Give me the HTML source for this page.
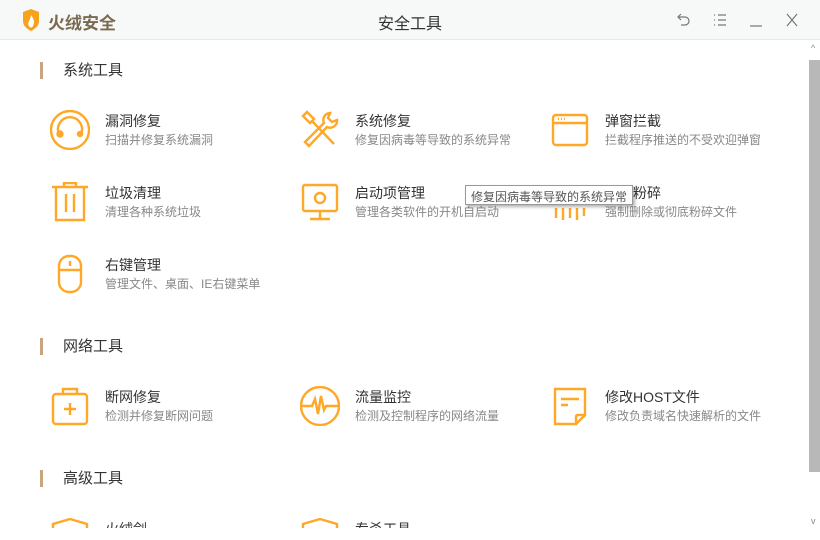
<!DOCTYPE html>
<html><head><meta charset="utf-8"><style>
*{margin:0;padding:0;box-sizing:border-box}
html,body{width:820px;height:540px;overflow:hidden}
body{background:#fff;font-family:"Liberation Sans","Noto Sans CJK SC",sans-serif;position:relative}
.hdr{position:absolute;left:0;top:0;width:820px;height:40px;background:#f7f8f8;border-bottom:1px solid #e8e8e8}
.logo{position:absolute;left:48px;top:9px;font-size:17px;font-weight:bold;color:#7a6a50}
.ttl{position:absolute;left:0;width:820px;text-align:center;top:10px;font-size:16px;color:#333}
.main{position:absolute;left:0;top:40px;width:808px;height:488px;overflow:hidden}
.sec{position:absolute;left:40px;height:17px;border-left:3px solid #c8a57e;padding-left:20px;font-size:15px;color:#333;line-height:17px}
.it{position:absolute;width:240px;height:40px}
.it svg{position:absolute;left:-20px;top:-20px;width:40px;height:40px}
.it b{position:absolute;left:35px;top:-19px;font-weight:normal;font-size:14px;color:#333;white-space:nowrap}
.it i{position:absolute;left:35px;top:1px;font-style:normal;font-size:12px;color:#888;white-space:nowrap}
.sb{position:absolute;left:809px;top:60px;width:11px;height:412px;background:#b8b8b8}
.tip{position:absolute;left:465px;top:185px;width:168px;height:20px;border:1px solid #999;background:#fff;box-shadow:2px 2px 3px rgba(0,0,0,.3);font-size:12px;color:#555;padding:2px 0 0 5px;white-space:nowrap}
</style></head><body>
<div class="hdr">
<svg style="position:absolute;left:22px;top:9px" width="18" height="22" viewBox="0 0 18 22"><path d="M1 3L9 0 17 3V12C17 17 13 20 9 22 5 20 1 17 1 12Z" fill="#f7a21d"/><path d="M9 6C12 10 13 13 11 17 10 19 8 19 7 17 5 14 8 12 9 6Z" fill="#fff"/></svg>
<div class="logo">火绒安全</div>
<div class="ttl">安全工具</div>
<svg style="position:absolute;left:676px;top:12px" width="16" height="16" viewBox="0 0 16 16" fill="none" stroke="#777" stroke-width="1.2"><path d="M5 2L2 5 5 8M2 5H9A4 4 0 0 1 9 13H5"/></svg>
<svg style="position:absolute;left:712px;top:12px" width="16" height="16" viewBox="0 0 16 16" fill="none" stroke="#777" stroke-width="1.2"><path d="M2 3H3M6 3H14M2 8H3M6 8H14M2 13H3M6 13H14"/></svg>
<svg style="position:absolute;left:748px;top:12px" width="16" height="16" viewBox="0 0 16 16" fill="none" stroke="#777" stroke-width="1.2"><path d="M2 14H14"/></svg>
<svg style="position:absolute;left:784px;top:12px" width="16" height="16" viewBox="0 0 16 16" fill="none" stroke="#777" stroke-width="1.2"><path d="M3 2L13 14M13 2L3 14"/></svg>
</div>
<div class="main">
<div class="sec" style="top:22px">系统工具</div>
<div class="it" style="left:70px;top:90px"><svg viewBox="0 0 40 40" fill="none" stroke="#ffa726" stroke-width="2.4"><circle cx="20" cy="20" r="19"/><path d="M9 24A12 12 0 1 1 31 24"/><circle cx="10" cy="24" r="2.5" fill="#ffa726"/><circle cx="30" cy="24" r="2" fill="#ffa726"/></svg><b>漏洞修复</b><i>扫描并修复系统漏洞</i></div>
<div class="it" style="left:320px;top:90px"><svg viewBox="0 0 40 40" fill="none" stroke="#ffa726" stroke-width="2.4"><path d="M3 6L7 2 14 9 10 13ZM12 11L34 34"/><path d="M30 3A7 7 0 0 0 24 13L5 32 9 36 27 17A7 7 0 0 0 37 10L32 12 28 8Z"/></svg><b>系统修复</b><i>修复因病毒等导致的系统异常</i></div>
<div class="it" style="left:570px;top:90px"><svg viewBox="0 0 40 40" fill="none" stroke="#ffa726" stroke-width="2.4"><rect x="3" y="5" width="34" height="30" rx="3"/><path d="M3 13H37"/><path d="M8 9H9M11 9H12M14 9H15"/></svg><b>弹窗拦截</b><i>拦截程序推送的不受欢迎弹窗</i></div>
<div class="it" style="left:70px;top:162px"><svg viewBox="0 0 40 40" fill="none" stroke="#ffa726" stroke-width="2.4"><path d="M2 5H38M14 5V1H26V5M6 5V38H34V5M16 12V30M24 12V30"/></svg><b>垃圾清理</b><i>清理各种系统垃圾</i></div>
<div class="it" style="left:320px;top:162px"><svg viewBox="0 0 40 40" fill="none" stroke="#ffa726" stroke-width="2.4"><rect x="3" y="3" width="34" height="26" rx="2"/><path d="M20 29V37M10 37H30"/><circle cx="20" cy="16" r="5"/></svg><b>启动项管理</b><i>管理各类软件的开机自启动</i></div>
<div class="it" style="left:570px;top:162px"><svg viewBox="0 0 40 40" fill="none" stroke="#ffa726" stroke-width="2.4"><path d="M3 22V8H37V22M6 26V36M13 26V38M20 26V36M27 26V38M34 26V34"/></svg><b>文件粉碎</b><i>强制删除或彻底粉碎文件</i></div>
<div class="it" style="left:70px;top:234px"><svg viewBox="0 0 40 40" fill="none" stroke="#ffa726" stroke-width="2.4"><rect x="9" y="2" width="22" height="36" rx="10"/><path d="M9 16H31M20 7V12"/></svg><b>右键管理</b><i>管理文件、桌面、IE右键菜单</i></div>
<div class="sec" style="top:298px">网络工具</div>
<div class="it" style="left:70px;top:366px"><svg viewBox="0 0 40 40" fill="none" stroke="#ffa726" stroke-width="2.4"><rect x="3" y="8" width="34" height="30" rx="3"/><path d="M13 8V3H27V8M20 17V29M14 23H26"/></svg><b>断网修复</b><i>检测并修复断网问题</i></div>
<div class="it" style="left:320px;top:366px"><svg viewBox="0 0 40 40" fill="none" stroke="#ffa726" stroke-width="2.4"><circle cx="20" cy="20" r="19"/><path d="M1 20H12L15 13 18 28 21 10 24 24 26 20H39"/></svg><b>流量监控</b><i>检测及控制程序的网络流量</i></div>
<div class="it" style="left:570px;top:366px"><svg viewBox="0 0 40 40" fill="none" stroke="#ffa726" stroke-width="2.4"><path d="M5 3H35V29L26 38H5Z M26 38V31Q26 29 28 29H35M11 13H29M11 19H18"/></svg><b>修改HOST文件</b><i>修改负责域名快速解析的文件</i></div>
<div class="sec" style="top:430px">高级工具</div>
<div class="it" style="left:70px;top:498px"><svg viewBox="0 0 40 40" fill="none" stroke="#ffa726" stroke-width="2.4"><path d="M3 6L20 1 37 6V38H3Z"/></svg><b>火绒剑</b><i></i></div>
<div class="it" style="left:320px;top:498px"><svg viewBox="0 0 40 40" fill="none" stroke="#ffa726" stroke-width="2.4"><path d="M3 6L20 1 37 6V38H3Z"/></svg><b>专杀工具</b><i></i></div>
</div>
<div class="sb"></div>
<div style="position:absolute;left:811px;top:43px;font-size:9px;color:#888">^</div>
<div style="position:absolute;left:811px;top:516px;font-size:9px;color:#888">v</div>
<div class="tip">修复因病毒等导致的系统异常</div>
</body></html>
